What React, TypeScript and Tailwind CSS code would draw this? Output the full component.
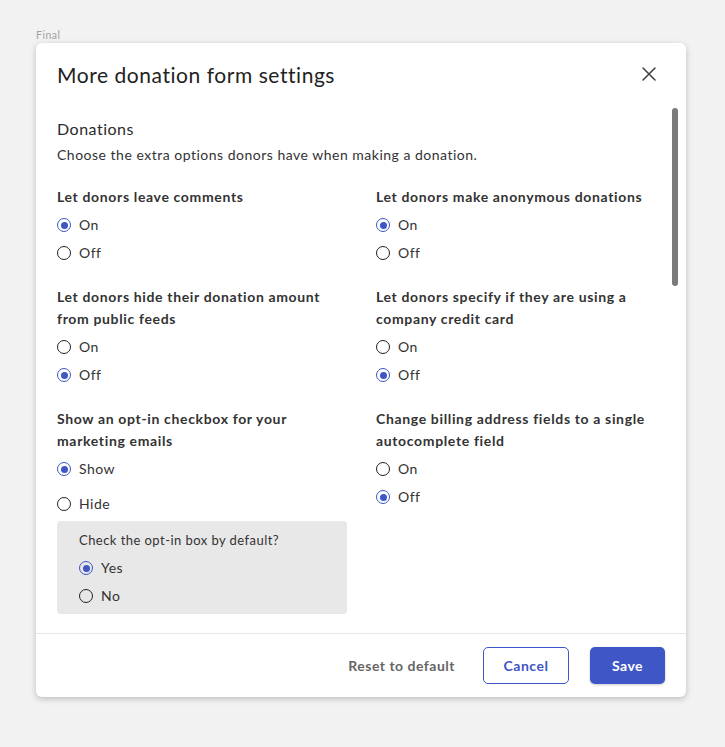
import React from "react";

const font = { fontFamily: "Lato, 'Noto Sans', sans-serif" };

function Radio({ label, checked }: { label: string; checked?: boolean }) {
  return (
    <div className="flex h-[28px] items-center gap-[8px]">
      {checked ? (
        <span className="flex h-[14px] w-[14px] items-center justify-center rounded-full border-[1.5px] border-[#3e56c6]">
          <span className="h-[7px] w-[7px] rounded-full bg-[#3e56c6]" />
        </span>
      ) : (
        <span className="h-[14px] w-[14px] rounded-full border-[1.5px] border-[#222]" />
      )}
      <span className="text-[14px] leading-[20px] tracking-[0.5px] text-[#333]">{label}</span>
    </div>
  );
}

function Setting({
  lines,
  options,
  checked,
}: {
  lines: string[];
  options: string[];
  checked: number;
}) {
  return (
    <div className="flex flex-col">
      <div className="text-[14px] font-bold leading-[22px] tracking-[0.65px] text-[#333]">
        {lines.map((l, i) => (
          <div key={i}>{l}</div>
        ))}
      </div>
      <div className="mt-[3px] flex flex-col">
        {options.map((o, i) => (
          <Radio key={o} label={o} checked={i === checked} />
        ))}
      </div>
    </div>
  );
}

export default function App() {
  return (
    <div className="min-h-[747px] w-[725px] bg-[#f2f2f2] pt-[29px]" style={font}>
      <div className="ml-[36px] text-[10.5px] leading-[12px] tracking-[0.5px] text-[#a3a3a3]">Final</div>
      <div className="ml-[36px] mt-[2px] flex h-[654px] w-[650px] flex-col overflow-hidden rounded-[6px] bg-white shadow-[0_2px_6px_rgba(0,0,0,0.22)]">
        {/* Header */}
        <div className="flex h-[65px] shrink-0 items-start justify-between pl-[21px] pr-[29px] pt-[18px]">
          <h1 className="text-[21px] leading-[28px] tracking-[0.55px] text-[#222]">More donation form settings</h1>
          <button className="mt-[5px] text-[#444]" aria-label="Close">
            <svg width="16" height="16" viewBox="0 0 16 16" fill="none" stroke="currentColor" strokeWidth="1.6" strokeLinecap="round">
              <path d="M2 2L14 14M14 2L2 14" />
            </svg>
          </button>
        </div>
        {/* Body */}
        <div className="flex min-h-0 flex-1">
          <div className="flex-1 overflow-hidden pl-[21px] pt-[9px]">
            <div className="text-[16px] leading-[24px] tracking-[0.5px] text-[#2b2b2b]">Donations</div>
            <div className="mt-[4px] text-[14px] leading-[20px] tracking-[0.5px] text-[#333]">
              Choose the extra options donors have when making a donation.
            </div>
            <div className="mt-[21px] grid grid-cols-[319px_1fr] gap-y-[19px]">
              <Setting lines={["Let donors leave comments"]} options={["On", "Off"]} checked={0} />
              <Setting lines={["Let donors make anonymous donations"]} options={["On", "Off"]} checked={0} />
              <Setting
                lines={["Let donors hide their donation amount", "from public feeds"]}
                options={["On", "Off"]}
                checked={1}
              />
              <Setting
                lines={["Let donors specify if they are using a", "company credit card"]}
                options={["On", "Off"]}
                checked={1}
              />
              <div className="flex flex-col">
                <div className="text-[14px] font-bold leading-[22px] tracking-[0.65px] text-[#333]">
                  <div>Show an opt-in checkbox for your</div>
                  <div>marketing emails</div>
                </div>
                <div className="mt-[3px] flex flex-col">
                  <Radio label="Show" checked />
                  <div className="mt-[7px]">
                    <Radio label="Hide" />
                  </div>
                </div>
                <div className="mt-[3px] w-[290px] rounded-[4px] bg-[#e8e8e8] pb-[4px] pl-[22px] pt-[9px]">
                  <div className="text-[13px] leading-[20px] tracking-[0.45px] text-[#333]">Check the opt-in box by default?</div>
                  <div className="mt-[4px] flex flex-col">
                    <Radio label="Yes" checked />
                    <Radio label="No" />
                  </div>
                </div>
              </div>
              <Setting
                lines={["Change billing address fields to a single", "autocomplete field"]}
                options={["On", "Off"]}
                checked={1}
              />
            </div>
          </div>
          <div className="mr-[8px] w-[6px] shrink-0">
            <div className="h-[178px] w-[6px] rounded-full bg-[#7b7b7b]" />
          </div>
        </div>
        {/* Footer */}
        <div className="flex h-[64px] shrink-0 items-center justify-end gap-[21px] border-t border-[#e6e6e6] pr-[21px]">
          <button className="mr-[7px] text-[14px] font-bold tracking-[0.5px] text-[#666]">Reset to default</button>
          <button className="h-[37px] w-[86px] rounded-[5px] border-[1.5px] border-[#3e56c6] text-[14px] font-bold tracking-[0.5px] text-[#3e56c6]">
            Cancel
          </button>
          <button className="h-[37px] w-[75px] rounded-[5px] bg-[#3e56c6] text-[14px] font-bold tracking-[0.5px] text-white shadow-[0_1px_3px_rgba(0,0,0,0.2)]">
            Save
          </button>
        </div>
      </div>
    </div>
  );
}
